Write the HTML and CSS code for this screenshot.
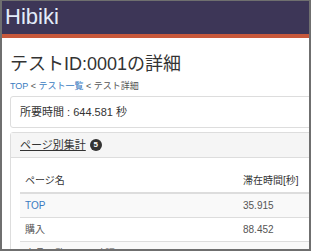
FILE: index.html
```html
<!DOCTYPE html>
<html lang="ja">
<head>
    <meta charset="UTF-8">
    <meta name="viewport" content="width=device-width, initial-scale=1.0">
    <title>Hibiki - テスト詳細</title>
    <link rel="stylesheet" href="styles.css">
</head>
<body>
    <div class="frame">
        <!-- ナビゲーションバー -->
        <nav class="navbar">
            <a class="brand" href="#">Hibiki</a>
        </nav>

        <div class="container">
            <h1>テストID:0001の詳細</h1>

            <div class="breadcrumb">
                <a href="#">TOP</a> &lt; <a href="#">テスト一覧</a> &lt; テスト詳細
            </div>

            <div class="panel">
                <div class="panel-body">所要時間 : 644.581 秒</div>
            </div>

            <!-- ページ別集計 -->
            <div class="panel">
                <div class="panel-heading">
                    <a href="#" class="toggle">ページ別集計</a>
                    <span class="badge">5</span>
                </div>
                <div class="panel-body table-wrap">
                    <table>
                        <thead>
                            <tr>
                                <th class="col-name">ページ名</th>
                                <th>滞在時間[秒]</th>
                            </tr>
                        </thead>
                        <tbody>
                            <tr>
                                <td><a href="#">TOP</a></td>
                                <td>35.915</td>
                            </tr>
                            <tr>
                                <td>購入</td>
                                <td>88.452</td>
                            </tr>
                            <tr>
                                <td>商品一覧画面の確認</td>
                                <td>243.372</td>
                            </tr>
                        </tbody>
                    </table>
                </div>
            </div>
        </div>
    </div>
</body>
</html>
```

FILE: styles.css
```css
html, body {
    margin: 0;
    padding: 0;
}

body {
    font-family: 'Liberation Sans', 'Noto Sans CJK JP', sans-serif;
    color: #333;
    background: #fff;
}

.frame {
    box-sizing: border-box;
    width: 311px;
    height: 251px;
    border: 2px solid #6f6f6f;
    border-top-width: 1px;
    overflow: hidden;
}

/* ナビゲーションバー */
.navbar {
    height: 33px;
    background: #3d3657;
    border-bottom: 4px solid #c7583b;
    padding-left: 3px;
}

.brand {
    display: block;
    font-size: 22px;
    line-height: 31px;
    color: #e3ecfa;
    text-decoration: none;
}

.container {
    padding-left: 8px;
    width: 340px;
}

h1 {
    font-size: 18px;
    font-weight: normal;
    margin: 13px 0 2px;
    line-height: 26px;
}

.breadcrumb {
    font-size: 9px;
    color: #555;
    margin-bottom: 4px;
}

a {
    color: #3a7bbf;
    text-decoration: none;
}

.panel {
    border: 1px solid #ddd;
    border-radius: 3px;
    margin-bottom: 4px;
}

.panel-body {
    padding: 8px 9px;
    font-size: 11px;
    line-height: 14px;
}

.panel-heading {
    background: #f5f5f5;
    border-bottom: 1px solid #ddd;
    padding: 5px 9px;
    height: 14px;
    font-size: 11px;
    line-height: 14px;
    display: flex;
    align-items: center;
    gap: 4px;
}

.toggle {
    color: #333;
    text-decoration: underline;
}

.badge {
    display: inline-block;
    width: 12px;
    height: 12px;
    border-radius: 50%;
    background: #333;
    color: #fff;
    font-size: 8px;
    font-weight: bold;
    line-height: 12px;
    text-align: center;
}

.table-wrap {
    padding: 11px 9px;
}

/* ページ別集計テーブル */
table {
    width: 100%;
    border-collapse: collapse;
    font-size: 10px;
}

th, td {
    text-align: left;
    padding: 5px 5px;
    line-height: 13px;
    font-weight: normal;
}

th {
    color: #333;
    border-bottom: 2px solid #ddd;
}

td {
    color: #555;
    border-top: 1px solid #ddd;
}

.col-name {
    width: 208px;
}

tbody tr:nth-child(odd) {
    background: #f9f9f9;
}
```
